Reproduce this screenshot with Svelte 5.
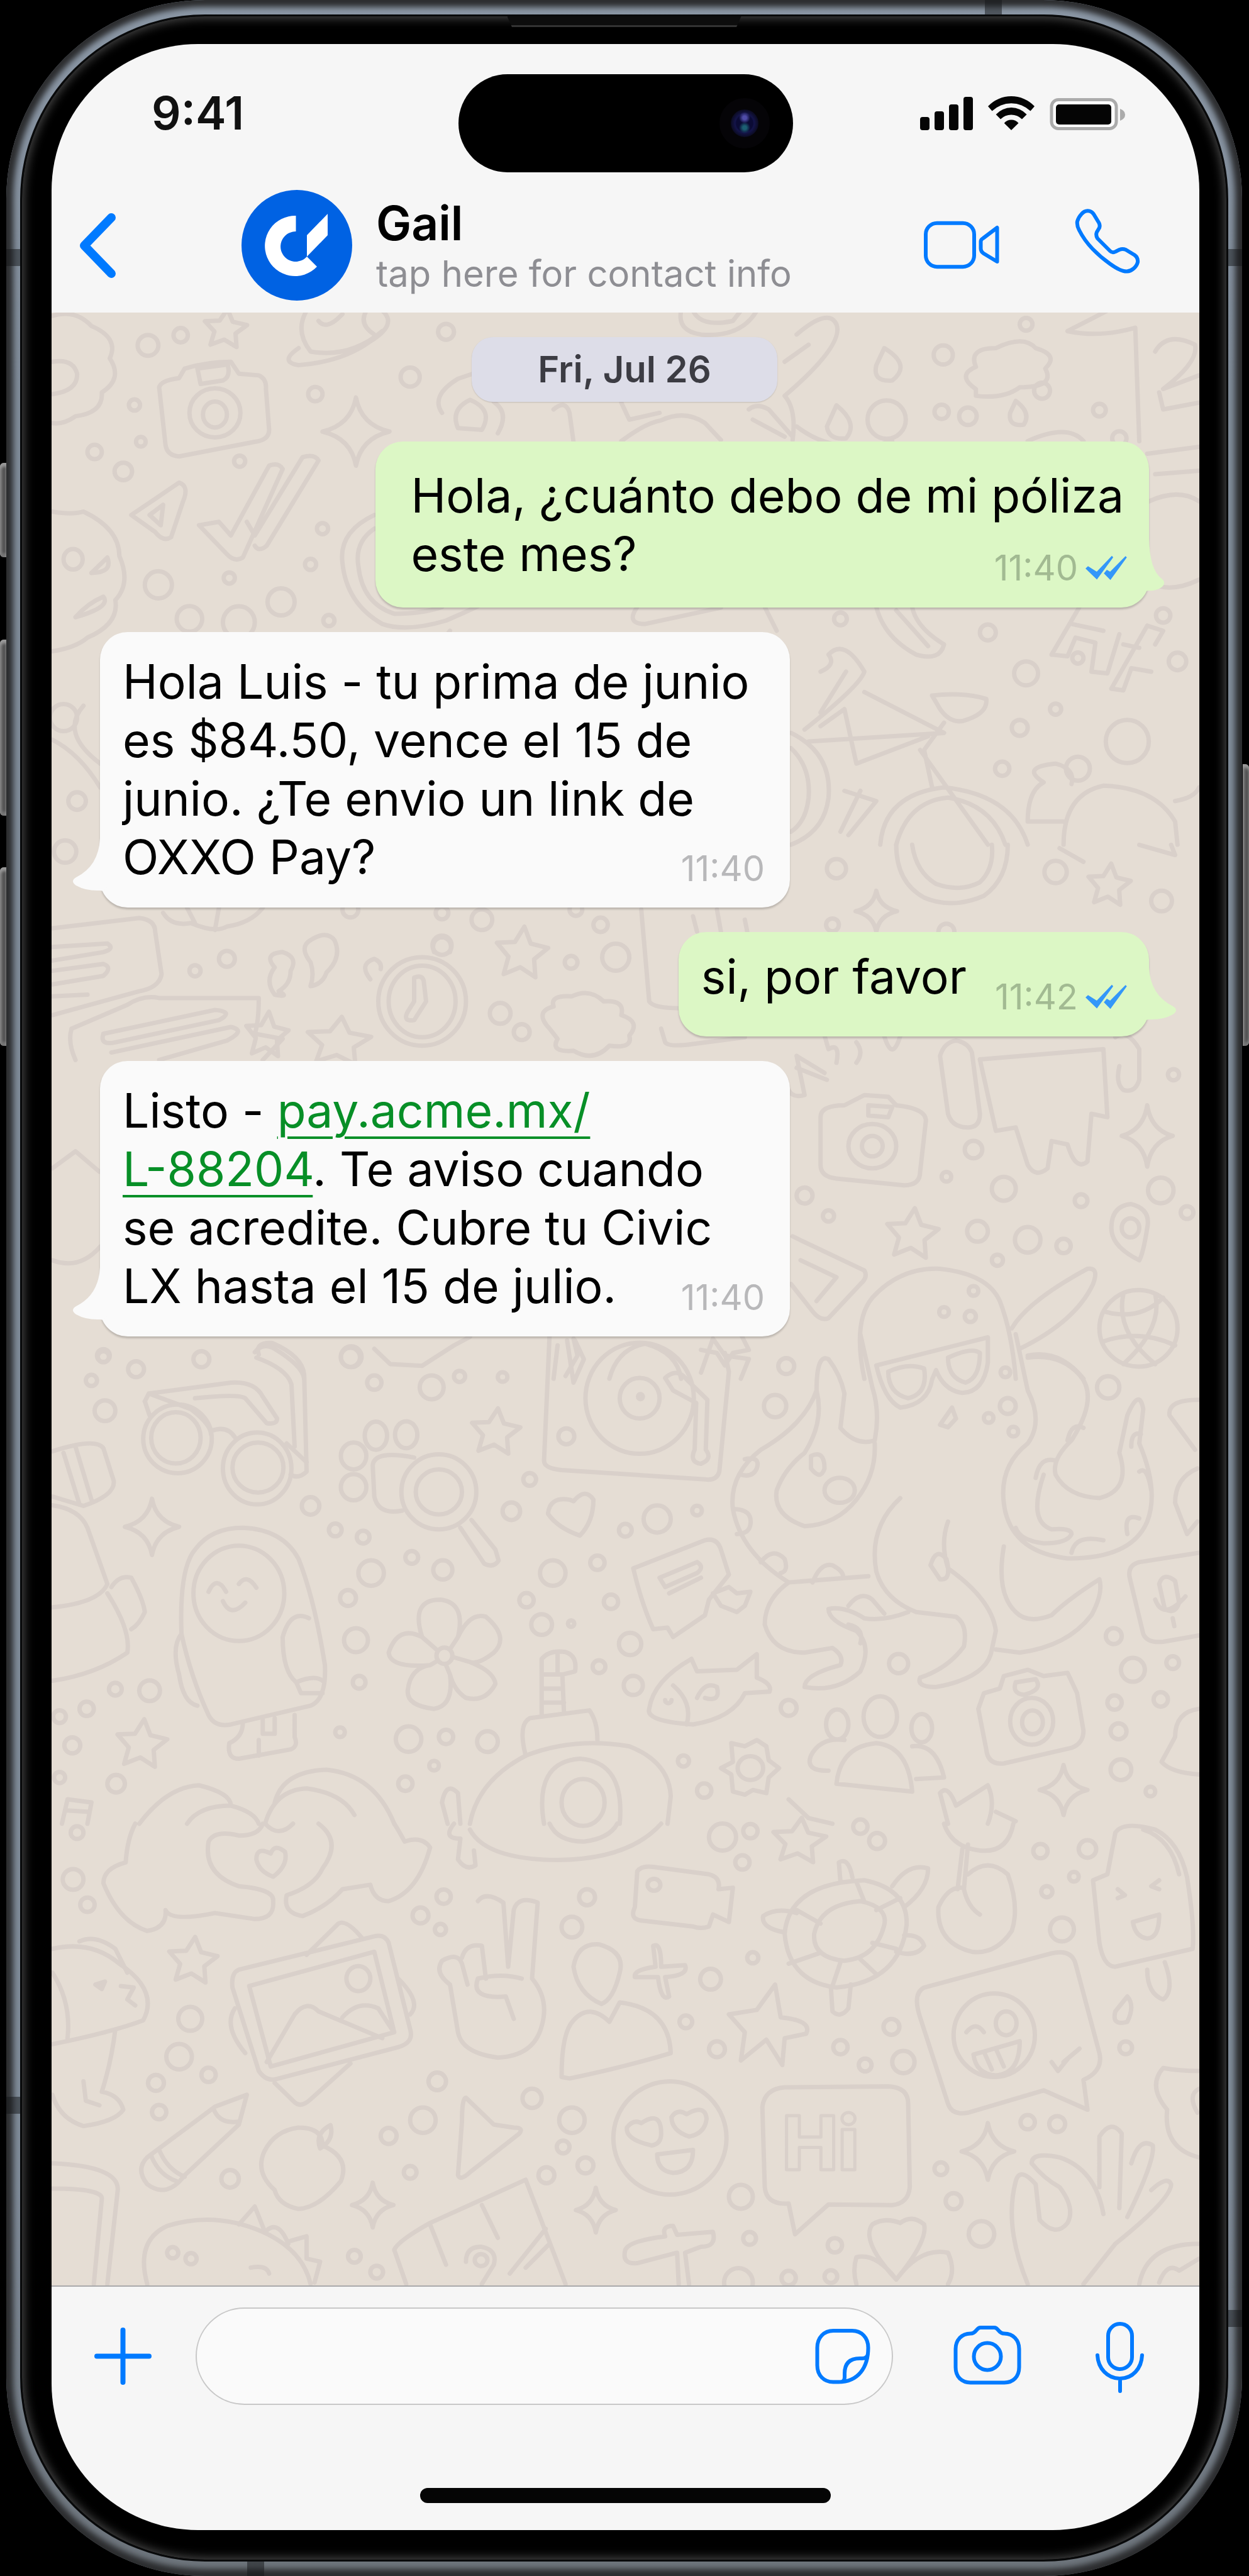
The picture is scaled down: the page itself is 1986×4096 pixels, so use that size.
<script lang="ts">
	type Message = {
		from: 'me' | 'them';
		lines: { text: string; link?: boolean }[][];
		time: string;
		short?: boolean;
	};

	let draft = $state('');

	const messages: Message[] = [
		{
			from: 'me',
			lines: [[{ text: 'Hola, ¿cuánto debo de mi póliza' }], [{ text: 'este mes?' }]],
			time: '11:40'
		},
		{
			from: 'them',
			lines: [
				[{ text: 'Hola Luis - tu prima de junio' }],
				[{ text: 'es $84.50, vence el 15 de' }],
				[{ text: 'junio. ¿Te envio un link de' }],
				[{ text: 'OXXO Pay?' }]
			],
			time: '11:40'
		},
		{
			from: 'me',
			lines: [[{ text: 'si, por favor' }]],
			time: '11:42',
			short: true
		},
		{
			from: 'them',
			lines: [
				[{ text: 'Listo - ' }, { text: 'pay.acme.mx/', link: true }],
				[{ text: 'L-88204', link: true }, { text: '. Te aviso cuando' }],
				[{ text: 'se acredite. Cubre tu Civic' }],
				[{ text: 'LX hasta el 15 de julio.' }]
			],
			time: '11:40'
		}
	];

	// Wallpaper doodles, one band of the chat at a time. Each band has its own vertical scale.
	type Band = {
		top: number;
		scale: number;
		dots: number[][];
		sparks: number[][];
		stars: number[][];
		shapes: string[];
	};

	const bands: Band[] = [
		{
			top: 495,
			scale: 0.5413,
			dots: [
				[186, 102, 13], [227, 72, 9], [169, 277, 7], [396, 245, 9], [515, 195, 12], [560, 62, 10],
				[119, 415, 9], [177, 385, 6], [155, 472, 11], [301, 442, 7], [405, 640, 7], [390, 745, 7],
				[199, 805, 17], [288, 785, 7], [353, 855, 17], [238, 905, 16], [413, 910, 7], [300, 915, 20],
				[1184, 130, 12], [1182, 297, 9], [1215, 310, 11], [1288, 40, 8], [1308, 235, 10], [1380, 292, 8],
				[1405, 375, 9], [1113, 320, 24], [1055, 905, 8], [1240, 945, 10], [1288, 1065, 15], [1353, 1020, 7],
				[1325, 1170, 7], [1280, 1225, 10], [1415, 1265, 27], [1353, 1345, 15], [1258, 1345, 9],
				[1478, 1030, 11], [1460, 895, 9], [97, 1440, 11], [80, 1195, 17]
			],
			sparks: [[447, 355, 42, 100]],
			stars: [[283, 55, 28, 60]],
			shapes: [
				'M66 15Q95 -5 115 45Q150 80 138 140Q155 200 128 240Q130 300 95 310Q80 335 66 330M66 150Q92 140 97 185Q98 235 66 245',
				'M200 225Q202 205 225 198L232 170Q260 150 290 150L300 185L325 190Q335 200 334 230L338 350Q338 380 320 385L225 428Q210 425 208 395Z M248 170L286 158Q290 195 280 205L252 215Z',
				'M238 300A32 72 0 1 0 302 300A32 72 0 1 0 238 300M255 305A15 38 0 1 0 285 305A15 38 0 1 0 255 305',
				'M375 110Q350 150 375 160Q430 150 465 90Q500 40 480 0M385 0Q370 60 390 120Q440 140 480 60M400 30Q410 60 430 10',
				'M165 600L225 505Q238 515 230 560L215 665Q205 680 195 650ZM188 600L205 570L202 630Z',
				'M250 630L275 620L290 660L338 455Q350 445 355 465L305 725Q295 740 285 715ZM310 620L320 660L380 430Q395 420 400 440L335 690Q325 710 320 690',
				'M66 590Q90 600 105 590Q150 640 150 720Q165 800 145 850Q150 920 110 960Q95 990 66 1000',
				'M80 730A12 30 0 1 0 104 730A12 30 0 1 0 80 730M115 770L135 725Q142 770 115 770M95 900Q110 860 130 840Q140 870 95 900',
				'M470 600Q425 650 430 740Q435 860 480 920Q510 945 560 910Q580 890 600 868M470 640Q445 680 450 750Q455 860 495 890Q530 890 555 870',
				'M555 300Q540 250 575 200L600 180M620 268Q640 300 625 360M575 345Q565 290 590 262Q620 290 605 350ZM695 290Q710 260 715 300L720 385M780 270L790 320L828 300M780 383Q810 330 830 322Q860 290 885 330L905 380',
				'M1000 70Q1040 -10 1050 40Q1060 100 985 250Q1000 290 995 380M985 150L1015 100M940 290Q950 270 965 290L995 370M945 320L985 370M855 0Q850 60 880 70Q930 80 950 0M870 0Q880 50 920 30L930 0',
				'M1110 110Q1145 160 1120 205Q1095 210 1100 160ZM1050 278Q1078 330 1062 375Q1040 380 1038 340ZM1275 265Q1295 300 1285 335Q1265 340 1268 300Z',
				'M1225 230Q1200 190 1225 165Q1215 110 1250 110Q1285 70 1300 110Q1330 130 1312 170Q1325 225 1280 225Q1260 260 1225 250Z',
				'M1340 60L1390 0M1340 60Q1380 80 1425 50L1430 383M1450 120Q1465 60 1500 100Q1505 150 1460 230L1505 190M1455 240L1460 290L1505 270M1440 420L1505 400M1450 480L1505 470M1442 560Q1480 520 1505 560M1445 800Q1470 830 1505 790',
				'M800 870Q785 920 810 920L905 872M1100 870Q1110 960 1150 1010Q1180 1030 1185 980Q1150 930 1145 870M1125 880L1165 985M960 870L975 940',
				'M1320 1010L1355 870M1320 1010L1340 1015L1350 960L1375 975L1370 1060L1390 1065L1405 950M1345 920L1385 940M1395 1110L1440 925M1395 1110L1410 1115L1420 1050L1445 1060M1410 980L1430 990M1440 925L1460 940L1450 980',
				'M1010 1230Q1080 1100 1085 1060Q1060 960 1040 1010Q1050 1040 1030 1060M1062 1060L1030 1180M1085 1120L1185 1240L1015 1265M1030 1220L1060 1170L1075 1330L1165 1250M1170 1130Q1210 1120 1238 1140Q1240 1180 1215 1200Q1195 1220 1180 1170ZM1185 1210L1160 1290L1170 1400',
				'M993 1240Q1045 1300 1040 1430Q1035 1530 993 1568M993 1285Q1018 1340 1015 1430Q1012 1500 993 1530M1105 1568Q1110 1420 1185 1400Q1270 1420 1290 1568M1125 1568Q1140 1440 1190 1430Q1245 1450 1262 1568M1080 1410L1055 1530M1060 1410L1100 1440L1065 1540M1155 1290L1240 1568',
				'M1290 1500Q1290 1410 1310 1385Q1280 1340 1325 1330Q1350 1345 1345 1390M1335 1568Q1335 1420 1385 1395Q1450 1400 1475 1500L1478 1568M1475 1440Q1500 1430 1505 1400M1290 1500L1335 1500',
				'M105 1160Q75 1240 126 1330M66 1260Q100 1300 126 1400',
				'M545 1000L565 940M1000 340Q1050 430 1120 383M1290 383Q1340 330 1360 383M460 0Q450 40 470 70'
			]
		},
		{
			top: 1344,
			scale: 0.5413,
			dots: [
				[1050, 70, 12], [1325, 80, 14], [1458, 165, 13], [1188, 255, 10], [605, 220, 13], [440, 190, 10],
				[555, 200, 8], [723, 190, 8], [754, 235, 9], [285, 335, 10], [245, 370, 7], [717, 345, 8],
				[773, 330, 17], [555, 295, 12], [628, 495, 13], [655, 550, 10], [1045, 235, 8], [1473, 675, 7],
				[1222, 895, 11], [1188, 975, 6], [1260, 1010, 15], [1357, 1045, 8], [1457, 1015, 16], [1010, 1030, 10],
				[1040, 1090, 7], [1227, 1135, 13], [1290, 1160, 16], [1335, 1178, 9], [1252, 1220, 7], [1490, 1080, 8],
				[1222, 1310, 6], [1218, 1385, 7], [1185, 1372, 6], [130, 1500, 8], [440, 1505, 12], [82, 20, 14]
			],
			sparks: [[1100, 195, 26, 60], [1440, 855, 32, 90]],
			stars: [[1392, 120, 28, 65], [655, 320, 34, 80], [425, 580, 42, 75], [1145, 1145, 34, 78], [335, 560, 28, 70]],
			shapes: [
				'M1125 0Q1125 110 1160 155Q1195 190 1235 150Q1265 100 1265 0M1145 0Q1150 80 1175 115Q1205 140 1230 110Q1248 70 1245 0',
				'M1430 0L1475 30L1470 0M1330 10L1360 50',
				'M66 245L175 215Q195 220 195 255L203 380Q200 420 175 430L66 500M66 300L135 290Q145 305 130 315L66 340M66 370L130 350Q142 360 130 385L66 410M66 445L110 440',
				'M90 540Q85 580 95 632M90 540L160 470Q180 440 200 450L325 450Q325 520 320 555L355 570L330 632M130 555L270 485Q295 490 275 515L145 580Q125 590 130 555M140 610L290 535Q310 545 285 575L200 632',
				'M345 360Q330 320 355 315Q375 330 365 370Q365 410 350 430Q365 450 345 440Q332 400 345 360M390 280Q410 250 420 280Q430 330 410 375Q405 410 390 415Q395 380 390 345Q375 300 390 280',
				'M205 200Q215 240 240 230Q270 260 285 240Q315 230 330 185M235 185L245 230M275 185L270 250',
				'M475 460A55 130 0 1 0 585 460A55 130 0 1 0 475 460M488 460A42 105 0 1 0 572 460A42 105 0 1 0 488 460M520 390Q530 380 532 400L535 460L520 515Q505 520 512 490L520 460ZM545 315Q540 280 555 270Q570 280 565 315M465 395Q450 350 470 335Q480 345 478 365',
				'M690 540Q670 490 695 475Q690 440 718 445Q740 420 758 460Q785 455 780 500Q805 520 790 560Q795 600 765 590Q745 640 720 605Q690 610 700 570Z',
				'M805 190L815 460Q820 480 853 480M830 540L835 580Q840 595 870 585L935 565M870 210L875 255M935 220L938 255M900 190L905 255',
				'M1035 560L1040 600Q1055 580 1050 640M1075 580Q1085 610 1075 640M1180 620Q1185 580 1200 575Q1215 580 1220 610L1230 790Q1230 830 1215 830Q1195 830 1190 790ZM1230 630L1250 840L1275 830L1290 940Q1300 980 1315 950L1320 870L1340 880Q1350 960 1365 930L1370 790L1390 800L1385 600L1230 630M1400 565Q1415 540 1430 600L1430 690Q1425 730 1410 720Q1400 700 1405 650M1110 562Q1120 640 1130 562',
				'M1000 620L1010 735Q995 745 990 720M1000 620L1035 670M1000 655L1038 690',
				'M1030 800Q1030 765 1060 765L1085 735L1115 740L1125 765Q1165 775 1162 815L1155 960Q1155 1000 1135 1000L1050 980Q1030 975 1030 940ZM1065 885A30 65 0 1 0 1125 885A30 65 0 1 0 1065 885M1082 885A13 30 0 1 0 1108 885A13 30 0 1 0 1082 885M1090 765L1120 770L1115 800L1090 795Z',
				'M1395 1125Q1395 1060 1420 1055Q1445 1070 1440 1125Q1435 1200 1430 1220Q1395 1180 1395 1125M1408 1125A11 28 0 1 0 1430 1125A11 28 0 1 0 1408 1125',
				'M995 1150L1085 1250Q1090 1270 1080 1290L1040 1390Q1030 1400 1020 1370L993 1290M1005 1220L1050 1270L1025 1340',
				'M1085 1568Q1070 1400 1095 1330Q1130 1240 1180 1245Q1240 1260 1255 1340Q1270 1430 1275 1568M1270 1420Q1290 1340 1365 1245Q1380 1240 1372 1290Q1350 1400 1280 1480M1290 1500Q1330 1480 1360 1568',
				'M1380 1420A48 110 0 1 0 1478 1420A48 110 0 1 0 1380 1420M1385 1370Q1430 1400 1460 1330M1383 1460Q1430 1420 1475 1470M1410 1320Q1400 1430 1450 1525M1450 1320Q1460 1420 1410 1525',
				'M320 1490Q330 1460 345 1480Q380 1530 382 1568M695 1568L700 1470M470 1480L490 1525L530 1530L570 1470L590 1445M720 1450L725 1500L710 1560M765 1568Q775 1480 810 1465Q850 1490 855 1568M880 1550L895 1450L910 1500L940 1510L930 1568',
				'M66 950L95 900L125 960M66 1220Q100 1250 126 1180'
			]
		},
		{
			top: 2122,
			scale: 0.4962,
			dots: [
				[130, 72, 7], [115, 148, 7], [171, 112, 10], [253, 80, 10], [132, 245, 13], [441, 72, 13],
				[470, 155, 9], [542, 170, 15], [577, 135, 7], [631, 137, 6], [987, 102, 10], [973, 230, 14],
				[1391, 170, 14], [1262, 122, 6], [1265, 230, 10], [1241, 268, 6], [390, 550, 11], [421, 627, 8],
				[456, 650, 8], [642, 567, 11], [665, 465, 8], [785, 628, 8], [825, 592, 17], [875, 565, 6],
				[466, 765, 16], [517, 715, 8], [556, 755, 12], [437, 845, 10], [694, 765, 16], [750, 732, 9],
				[661, 852, 9], [767, 857, 9], [680, 930, 13], [717, 927, 4], [791, 992, 14], [447, 980, 15],
				[451, 1115, 8], [752, 1065, 8], [795, 1125, 12], [188, 1142, 13], [145, 1137, 8], [109, 1200, 9],
				[91, 1317, 10], [146, 1440, 11], [513, 1297, 16], [560, 1290, 9], [612, 1305, 13], [427, 1275, 6],
				[545, 1382, 6], [509, 1440, 9], [858, 1367, 7], [884, 1462, 9], [990, 1197, 10], [1128, 1055, 12],
				[1398, 967, 10], [1422, 1075, 15], [1472, 1052, 8], [1399, 1180, 9], [1457, 1170, 9], [1404, 1272, 10],
				[1407, 1395, 13], [1444, 1465, 6], [1272, 312, 6], [711, 327, 10], [75, 1225, 8], [75, 1420, 7]
			],
			sparks: [[191, 617, 34, 90], [1335, 1460, 30, 80]],
			stars: [[622, 315, 32, 78], [178, 1315, 33, 82]],
			shapes: [
				'M325 65Q320 25 342 28Q380 70 382 130L385 440Q375 465 365 450M322 75Q360 110 366 160L370 360M182 215L187 190L290 155Q320 150 330 200L348 270Q348 290 335 285L308 205Q300 190 245 205M187 190L240 240Q265 290 265 320',
				'M180 335A43 110 0 1 0 266 335A43 110 0 1 0 180 335M190 332A31 82 0 1 0 252 332A31 82 0 1 0 190 332M280 430A43 115 0 1 0 366 430A43 115 0 1 0 280 430M292 427A32 80 0 1 0 356 427A32 80 0 1 0 292 427M265 310Q285 290 295 330M182 215L188 260M360 350L385 410',
				'M66 375Q120 330 130 365L143 470Q145 515 105 550L66 520M80 380L100 545M95 360L115 530M66 548Q100 560 110 620L135 800Q125 860 66 875M140 810Q150 770 165 780Q180 850 182 890Q175 930 165 945M135 830Q165 950 160 1020Q120 1090 66 1110',
				'M428 390A16 43 0 1 0 460 390A16 43 0 1 0 428 390M458 325A14 45 0 1 0 486 325A14 45 0 1 0 458 325M496 322A14 43 0 1 0 524 322A14 43 0 1 0 496 322M428 490A16 42 0 1 0 460 490A16 42 0 1 0 428 490M520 395Q470 370 468 420L470 520Q475 580 505 565',
				'M504 505A47 120 0 1 0 598 505A47 120 0 1 0 504 505M522 505A29 72 0 1 0 580 505A29 72 0 1 0 522 505M578 620L608 735Q620 750 626 725L622 690L592 595',
				'M690 0L683 405Q683 430 705 435L885 465Q900 470 903 440L915 120L910 60M735 205A68 178 0 1 0 871 205A68 178 0 1 0 735 205M778 205A25 65 0 1 0 828 205A25 65 0 1 0 778 205M801 200A3 8 0 1 0 807 200A3 8 0 1 0 801 200M835 140Q850 105 862 145L888 210L886 370Q895 400 880 415Q865 410 872 370L874 220L845 180ZM712 20L720 155L733 80L722 20M880 50L900 60L910 100L920 60L940 50L930 0',
				'M715 530Q690 520 688 575Q700 620 728 645Q745 600 745 530Q735 490 720 535Z',
				'M795 750L885 660Q900 650 905 690L915 770L890 850L885 900L845 970L838 940L820 945Q805 860 795 750M828 780L875 730Q885 745 875 765L835 810ZM840 830L880 780M895 830L915 810L925 830L942 825L935 870L925 890L905 870Z',
				'M228 960Q225 750 245 690Q265 620 305 620Q355 625 375 720Q395 850 408 1060Q410 1170 390 1190L290 1250Q270 1260 262 1220Q240 1100 228 960M243 830A56 150 0 1 0 357 830A56 150 0 1 0 243 830M262 825Q272 770 284 825M300 800Q310 765 322 812M280 855Q290 910 308 860M355 970Q365 880 388 910M355 970Q355 1080 372 1115Q395 1090 405 1110M372 1115L378 1150L405 1150M228 960Q215 1000 225 1090Q230 1180 248 1190M305 1245Q305 1290 288 1310Q285 1360 300 1360L365 1330Q375 1320 370 1290L370 1220M330 1235L330 1280L345 1280L345 1230M325 1350L325 1300',
				'M530 970Q515 850 553 850Q585 860 575 970M575 970Q590 890 610 905Q640 970 620 1020Q600 1060 590 1050Q620 1080 622 1120Q610 1180 585 1165Q570 1140 565 1090Q570 1190 545 1200Q510 1190 512 1140Q515 1070 540 1060Q490 1070 488 1020Q500 930 530 970L548 1010M575 970L566 1005M590 1050L570 1035M565 1090L560 1060M540 1060L550 1045M548 1030A10 26 0 1 0 568 1030A10 26 0 1 0 548 1030',
				'M660 1350Q650 1250 665 1230L740 1205Q750 1240 750 1300M680 1225L680 1040Q690 1010 710 1018Q725 1030 722 1080L706 1090L708 1210M683 1090L706 1090M683 1135L706 1135M683 1180L708 1180M700 1018L700 1085',
				'M590 1568Q600 1430 660 1350Q720 1290 790 1320Q840 1370 842 1480L838 1568M683 1568Q670 1370 728 1360Q785 1370 778 1568M705 1500A27 75 0 1 0 759 1500A27 75 0 1 0 705 1500M555 1500Q560 1430 575 1470L578 1568M562 1568L555 1500',
				'M868 1040L875 1080L925 1075L950 1025L950 1100Q970 1120 966 1145L935 1150Q920 1230 870 1250Q810 1240 815 1200Q820 1110 868 1040M845 1125Q870 1180 862 1250M835 1172A4 10 0 1 0 843 1172M875 1165Q885 1110 900 1130Q905 1180 885 1165',
				'M1025 180Q1025 60 1040 80Q1055 130 1060 190L1055 300Q1075 360 1098 340Q1105 250 1095 170L1080 0M1025 180Q1010 290 955 370Q915 450 920 560Q930 700 990 795L1090 775M1098 350Q1100 450 1075 530Q1050 610 1010 615Q970 580 975 500Q985 430 1010 380Q1035 280 1025 180M1035 500A19 40 0 1 0 1073 500A19 40 0 1 0 1035 500M1018 390Q1035 370 1035 430Q1030 470 1018 430ZM935 400Q955 390 950 430Q945 460 930 450M920 560Q945 560 942 610Q940 640 925 640M955 730Q970 680 985 720Q990 760 980 765M1020 795Q1030 730 1045 740Q1060 760 1058 780',
				'M1100 100L1240 10L1240 90Q1235 185 1208 188Q1185 180 1175 115L1170 145Q1165 225 1130 235Q1110 210 1100 100M1115 120Q1140 90 1160 110Q1165 190 1140 205Q1115 190 1115 120M1190 75Q1220 40 1230 60Q1230 140 1212 155Q1190 140 1190 75M1180 290L1195 235L1200 270L1190 298Z',
				'M1130 525Q1090 620 1100 760Q1110 850 1150 890L1200 905Q1215 930 1210 1000Q1190 1070 1155 1100Q1150 1130 1175 1130Q1240 1100 1245 1010L1250 950Q1245 850 1190 750Q1180 670 1190 600M1168 740Q1175 680 1188 720Q1195 790 1180 785ZM990 795Q960 850 960 930Q970 1020 1010 1020L1045 1005Q1060 1030 1055 1060Q1010 1090 1010 1130Q1050 1150 1080 1080Q1095 1000 1075 950Q1040 920 1040 880Q1060 870 1085 910Q1110 920 1140 890M1065 870Q1080 820 1095 850L1110 895M1065 930Q1085 940 1080 990',
				'M1275 0L1290 180Q1310 280 1290 350Q1250 430 1262 570Q1275 700 1340 718Q1420 720 1440 600Q1455 500 1430 350L1435 240Q1430 170 1415 260L1405 380Q1420 500 1380 525Q1340 520 1325 450Q1320 400 1345 340Q1380 200 1355 130Q1330 60 1290 75M1310 450Q1290 600 1320 625Q1345 620 1345 640Q1340 670 1310 670Q1280 660 1275 620M1260 680Q1250 830 1275 890Q1290 930 1320 900Q1340 850 1380 785Q1385 830 1370 900Q1340 1000 1280 1020L1250 1010M1340 340Q1345 280 1360 300M1300 460Q1305 390 1325 405M1415 640Q1410 570 1430 590M1345 700Q1350 640 1385 660M1430 440Q1440 420 1445 500M1420 360Q1420 310 1432 320',
				'M1505 210Q1465 210 1468 260L1500 370M1475 540Q1475 460 1503 430M1475 540L1490 640L1503 600M1505 700L1430 730Q1415 740 1418 780L1435 960Q1440 990 1460 985L1505 965M1455 800Q1460 760 1475 790L1480 860Q1475 900 1462 880ZM1450 850Q1460 920 1488 840M1472 910L1474 935',
				'M1235 1150L1255 1135L1260 1095L1290 1075L1310 1095L1340 1085L1352 1150L1360 1270Q1360 1310 1345 1325L1260 1375Q1240 1380 1238 1330L1228 1200ZM1268 1240A27 75 0 1 0 1322 1240A27 75 0 1 0 1268 1240M1283 1243A13 38 0 1 0 1309 1243A13 38 0 1 0 1283 1243M1275 1115L1300 1105Q1310 1140 1285 1155Q1270 1150 1275 1115',
				'M1037 1250A14 48 0 1 0 1065 1250A14 48 0 1 0 1037 1250M1084 1225A21 65 0 1 0 1126 1225A21 65 0 1 0 1084 1225M1144 1262A13 45 0 1 0 1170 1262A13 45 0 1 0 1144 1262M1050 1440Q1055 1320 1100 1310Q1140 1320 1145 1465ZM1060 1300Q1030 1290 1018 1350Q1010 1400 1040 1398M1145 1320Q1175 1310 1185 1420L1150 1425',
				'M905 1390L920 1370L918 1310L935 1320L950 1300L962 1320L965 1365L978 1390L965 1420L962 1470L945 1460L935 1475L920 1465L918 1410ZM926 1390A16 38 0 1 0 958 1390A16 38 0 1 0 926 1390',
				'M175 1568Q210 1450 250 1445Q290 1470 290 1510Q320 1530 325 1568M235 1568Q250 1510 290 1510M345 1500Q355 1400 410 1395Q470 1410 495 1568M333 1568Q345 1460 385 1455Q430 1470 445 1540M78 1568L85 1490L115 1500L110 1568M82 1525L112 1530',
				'M990 1490L1015 1550L1045 1568M1180 1470Q1190 1440 1200 1510L1240 1445Q1250 1500 1240 1568M1180 1470L1190 1568M1250 1530L1275 1560M1505 1200Q1475 1210 1475 1290L1458 1370Q1470 1405 1505 1410'
			]
		},
		{
			top: 2900,
			scale: 0.4736,
			dots: [
				[97, 30, 8], [92, 187, 13], [110, 272, 9], [907, 45, 17], [942, 25, 9], [932, 130, 9],
				[1101, 58, 10], [1306, 92, 9], [1365, 85, 11], [1348, 178, 6], [1314, 228, 7], [1333, 355, 15],
				[557, 245, 9], [528, 308, 10], [553, 355, 7], [737, 247, 10], [718, 347, 13], [239, 655, 15],
				[225, 782, 16], [196, 870, 10], [262, 843, 9], [200, 968, 9], [549, 865, 11], [668, 922, 12],
				[531, 995, 16], [488, 1048, 10], [515, 1170, 8], [718, 995, 16], [707, 1085, 8], [735, 1147, 10],
				[686, 1180, 10], [289, 1192, 11], [892, 522, 13], [945, 450, 7], [861, 665, 8], [900, 757, 10],
				[1055, 750, 9], [1119, 682, 10], [1134, 800, 14], [1086, 810, 8], [1413, 752, 8], [1290, 1002, 9],
				[1327, 1008, 10], [1181, 1158, 8], [1197, 1267, 10], [930, 1252, 15], [941, 1392, 8], [1048, 1415, 9],
				[1232, 1377, 16], [445, 1452, 8], [473, 1505, 8], [217, 1440, 7], [240, 1460, 7], [1043, 1520, 8],
				[990, 1525, 9], [927, 1540, 18], [1080, 10, 9]
			],
			sparks: [[1240, 1100, 33, 95], [468, 1280, 26, 75], [748, 1297, 25, 75]],
			stars: [[242, 462, 32, 82], [1003, 60, 35, 80]],
			shapes: [
				'M170 0Q160 50 158 130Q130 150 130 200Q150 330 185 360Q210 350 208 290Q215 330 270 300L320 320Q345 320 343 260Q345 220 300 210Q255 170 262 60Q270 20 300 40Q325 40 330 0M400 0Q430 60 405 150Q395 210 360 240Q355 300 380 310Q410 280 430 220L465 205Q470 260 488 260Q525 230 540 80Q530 40 508 60Q500 20 495 0M340 100Q322 75 322 120Q325 160 343 178Q362 140 358 95Q345 65 340 100M333 0Q350 50 368 0',
				'M590 20Q610 120 700 122Q790 120 830 0M690 0Q700 60 733 60Q765 50 775 0M570 0Q555 50 578 50L575 120Q585 160 597 140L595 90',
				'M800 160Q805 140 820 145L890 170Q905 180 902 220L920 215L915 330L895 305L890 345Q880 355 870 345L805 325Q790 320 797 280ZM813 205A8 20 0 1 0 829 205A8 20 0 1 0 813 205',
				'M600 260Q610 225 632 265L638 480L645 290Q650 240 675 265L668 520Q690 590 680 680Q670 780 625 785Q580 770 575 700L565 540Q545 500 555 460Q575 430 580 470L587 540M580 450Q585 400 605 410L610 520M600 520Q630 500 655 520M600 520Q590 590 635 580L645 655',
				'M300 490L470 378Q483 370 488 400L515 690Q520 735 500 750L350 855Q335 870 325 830L292 550Q290 500 300 490M313 545L470 430L495 700L340 815ZM335 800L370 640Q385 590 400 630L480 720M430 650Q450 590 475 620L492 690M435 520A15 42 0 1 0 465 520A15 42 0 1 0 435 520M385 440L425 335Q435 320 455 385M345 870L370 935Q378 955 390 925L440 805M295 620Q280 680 308 770M500 520Q530 600 515 640',
				'M720 480Q725 400 752 405Q785 430 778 500Q770 590 755 605Q725 570 720 480M705 850Q705 700 720 660Q740 600 765 665L778 600Q840 620 842 770Q780 820 715 855ZM820 410Q830 395 830 480L860 475Q865 510 835 515L840 580Q830 600 826 515L797 515Q795 490 823 480Z',
				'M985 370Q990 200 1085 190Q1140 220 1138 340Q1130 530 1050 550Q990 530 985 370M1022 370Q1030 270 1080 260Q1115 280 1110 340Q1100 450 1060 460Q1020 450 1022 370M1075 195L1085 262M1130 250L1100 290M1000 290L1030 335M990 470L1028 435M1095 400L1125 420M1055 465L1045 545M1080 455L1100 505M1055 195L1053 130Q1065 110 1070 180M1120 210Q1140 130 1165 150Q1165 220 1135 280M985 365Q955 350 958 310Q975 280 1000 300M1125 430Q1150 450 1160 410Q1155 370 1135 375M1043 550L1045 630Q1055 655 1065 620L1068 540',
				'M1185 0Q1195 80 1230 90Q1265 100 1272 0M1208 85L1202 220M1215 70L1210 220Q1215 280 1230 305M1215 170Q1240 110 1265 170Q1280 280 1270 360Q1250 440 1220 430Q1175 400 1178 280Q1190 210 1208 215',
				'M1400 30Q1410 -10 1450 20Q1480 60 1490 180Q1500 350 1497 420L1400 480Q1385 480 1380 400L1372 190L1390 170ZM1435 20Q1470 50 1480 170M1440 490Q1440 570 1460 590Q1475 560 1462 465M1403 220L1412 240L1403 250M1455 190L1445 210L1455 220M1422 330L1455 305Q1455 385 1440 385Q1425 380 1422 330',
				'M1160 550L1320 435Q1345 420 1350 470L1380 770Q1385 830 1360 860L1365 960L1310 895L1215 970Q1195 980 1190 940L1155 650Q1145 570 1160 550M1197 710A51 140 0 1 0 1299 710A51 140 0 1 0 1197 710M1213 700Q1225 660 1235 700M1250 670A13 40 0 1 0 1276 670A13 40 0 1 0 1250 670M1222 775L1280 730Q1280 840 1250 845Q1225 840 1222 775M1235 765L1245 825M1250 755L1260 815M1320 800L1328 830L1340 790M1335 800L1355 755',
				'M915 640L950 625L973 540L980 650Q1020 660 1012 705L985 720L982 810L962 725L930 795L935 700Z',
				'M66 420Q115 390 150 470Q200 560 180 660Q140 700 66 740M100 395Q120 370 145 420L160 500M66 500Q90 600 85 720M120 540L132 530L128 555ZM152 545L168 550L160 590L170 610M145 690Q140 800 128 900Q150 910 155 960Q145 1000 105 1015Q75 990 66 910M105 865L108 930L125 945',
				'M310 910L300 1010L232 1180Q210 1260 185 1210Q170 1160 185 1120L270 950ZM200 1095Q210 1160 232 1185M190 1115Q200 1180 222 1200M268 955Q275 1010 300 1000',
				'M375 1020Q405 1020 405 1080Q440 1120 428 1200Q400 1290 375 1293Q350 1280 345 1230Q320 1170 332 1100Q345 1030 375 1020M402 1090Q395 1040 415 1012Q420 1060 402 1090',
				'M585 920Q580 920 580 1000L575 1180Q578 1200 590 1170L652 1040Q658 1020 645 1020L620 1010Z',
				'M770 1055A71 190 0 1 0 912 1055A71 190 0 1 0 770 1055M787 1020Q795 990 805 1005Q830 960 830 1040Q830 1075 818 1080Q785 1060 787 1020M843 985Q850 955 862 975Q885 940 887 990Q885 1040 865 1050Q843 1030 843 985M825 1110L870 1095Q870 1170 845 1172Q825 1165 825 1110',
				'M985 885L1115 882Q1140 885 1140 940L1142 1220Q1140 1275 1120 1280L1040 1278L998 1378L990 1275Q962 1280 960 1220L957 950Q960 890 985 885',
				'M66 1140Q150 1150 148 1230L135 1545M66 1225Q130 1225 128 1260L118 1545',
				'M185 1545Q170 1400 210 1350Q270 1300 330 1370Q380 1430 390 1545M300 1345L320 1285L332 1365M335 1365Q350 1330 362 1410M365 1400L385 1385L385 1460L402 1470L395 1540M315 1490Q335 1480 338 1510',
				'M510 1545L495 1430Q500 1400 540 1340L660 1195L710 1545M540 1345L560 1480M605 1280L625 1390M685 1360L640 1510M585 1470Q585 1420 604 1420Q625 1430 620 1480L605 1545M596 1465A8 20 0 1 0 612 1465A8 20 0 1 0 596 1465M660 1490L690 1410',
				'M785 1430Q790 1400 835 1385Q830 1350 845 1350L850 1380L895 1370Q900 1420 880 1420L860 1440L865 1545M785 1430Q780 1480 800 1475L850 1440L852 1545',
				'M1130 1340Q1110 1320 1095 1345Q1080 1400 1125 1530Q1165 1400 1160 1345Q1145 1310 1130 1340M1125 1530Q1155 1420 1190 1440Q1200 1500 1190 1545M1125 1530Q1100 1440 1075 1455Q1070 1500 1075 1545',
				'M1295 1140Q1295 1100 1330 1120Q1375 1160 1385 1310M1295 1140Q1310 1190 1330 1220Q1350 1290 1340 1340Q1325 1390 1305 1330L1300 1210Q1280 1150 1275 1200Q1260 1350 1290 1545M1380 1220L1380 1050Q1395 990 1408 1040L1405 1290M1420 1140Q1430 1050 1447 1080Q1450 1130 1415 1320M1445 1230Q1465 1180 1470 1210Q1470 1260 1400 1410L1360 1545M1430 1545Q1440 1410 1505 1410M1455 1540Q1465 1470 1480 1500L1505 1460',
				'M1505 830Q1480 830 1460 820Q1440 880 1465 960Q1460 1090 1505 1120M1505 890Q1490 910 1503 970M1415 580Q1425 610 1415 665Q1395 680 1400 630Z'
			]
		}
	];

	function spark(x: number, y: number, rx: number, ry: number) {
		const q = (a: number, b: number) => `${x + a * rx} ${y + b * ry}`;
		return `M${q(0, -1)}Q${q(0.15, -0.2)} ${q(1, 0)}Q${q(0.15, 0.2)} ${q(0, 1)}Q${q(-0.15, 0.2)} ${q(-1, 0)}Q${q(-0.15, -0.2)} ${q(0, -1)}Z`;
	}

	function star(x: number, y: number, rx: number, ry: number) {
		const points = [];
		for (let i = 0; i < 10; i++) {
			const k = i % 2 ? 0.5 : 1;
			const a = (i * Math.PI) / 5 - Math.PI / 2 + 0.1;
			points.push(`${x + Math.cos(a) * rx * k} ${y + Math.sin(a) * ry * k}`);
		}
		return `M${points.join('L')}Z`;
	}

	const bars = [
		{ x: 1463, y: 187 },
		{ x: 1486, y: 178 },
		{ x: 1509, y: 167 },
		{ x: 1532, y: 155 }
	];
</script>

<div class="device">
	<span class="key key-left action"></span>
	<span class="key key-left volume-up"></span>
	<span class="key key-left volume-down"></span>
	<span class="key key-right power"></span>

	<div class="frame">
		<span class="antenna antenna-side left-top"></span>
		<span class="antenna antenna-side right-top"></span>
		<span class="antenna antenna-side left-bottom"></span>
		<span class="antenna antenna-side right-bottom"></span>
		<span class="antenna antenna-flat top-edge"></span>
		<span class="antenna antenna-flat bottom-edge"></span>

		<div class="bezel">
			<span class="speaker"></span>

			<main class="screen">
				<header class="header">
					<div class="status">
						<div class="clock">9:41</div>
						<div class="island"><span class="lens"></span></div>
						<svg class="status-icons" viewBox="1460 150 332 62" aria-hidden="true">
							{#each bars as bar}
								<rect x={bar.x} y={bar.y} width="15" height={208 - bar.y} rx="4" />
							{/each}
							<path d="M1571 170A51 51 0 0 1 1645 170L1638.500 177.500A44 44 0 0 0 1577.500 177.500Z" />
							<path d="M1583.600 183A33 33 0 0 1 1632.600 183L1625 190.500A24 24 0 0 0 1591 190.500Z" />
							<path d="M1596.700 196.700A15 15 0 0 1 1619.500 196.700L1608 208Z" />
							<rect class="battery" x="1672" y="159.500" width="103" height="46" rx="11" />
							<rect x="1679" y="167" width="88" height="32" rx="5" />
							<path class="nub" d="M1781 174Q1789 177 1789 183.500T1781 193Z" />
						</svg>
					</div>

					<div class="nav">
						<button class="icon-button back" aria-label="Back">
							<svg viewBox="126 336 58 105" width="58" height="105">
								<path class="chevron" d="M177 344L134 388.500L177 433" />
							</svg>
						</button>
						<svg class="avatar" viewBox="0 0 176 176" role="img" aria-label="Gail">
							<circle cx="88" cy="88" r="88" />
							<path d="M86.500 41A48 48 0 1 0 120 122L104 106A24 24 0 1 1 86.500 66ZM137 38V72L104 106V72Z" />
						</svg>
						<div class="contact">
							<h1>Gail</h1>
							<p>tap here for contact info</p>
						</div>
						<button class="icon-button video" aria-label="Video call">
							<svg viewBox="1469 340 121 96" width="121" height="96">
								<rect x="1473" y="352.700" width="77" height="69.500" rx="18" />
								<path d="M1586.500 360V414L1565 401Q1560.500 398 1560.500 393V382Q1560.500 379 1564 377Z" />
							</svg>
						</button>
						<button class="icon-button" aria-label="Voice call">
							<svg viewBox="1710 328 104 120" width="104" height="120">
								<path
									d="M1721 338C1726 332 1735 331 1740 338.500L1748.500 352.500Q1751 358 1748 362L1745 367Q1743 372 1746 377L1766 397Q1770 401 1775 398L1781 395Q1786 393 1791 395L1805 403.500Q1811 408 1810 415C1808 423 1800 429 1793 429.600C1785 430 1775 424 1766 417.500Q1751 407 1738.500 394Q1725 380 1717 364Q1713 357 1714 350Q1716 343 1721 338Z"
								/>
							</svg>
						</button>
					</div>
				</header>

				<section class="chat">
					<svg class="wallpaper" viewBox="82 498 1825 3136" preserveAspectRatio="xMidYMin slice" aria-hidden="true">
						{#each bands as band}
							<g transform="translate(0 {band.top}) scale(1.2666 {band.scale})">
								{#each band.dots as [x, y, r]}
									<ellipse cx={x} cy={y} rx={r} ry={(r * 1.2666) / band.scale} />
								{/each}
								{#each band.sparks as [x, y, rx, ry]}
									<path d={spark(x, y, rx, ry)} />
								{/each}
								{#each band.stars as [x, y, rx, ry]}
									<path d={star(x, y, rx, ry)} />
								{/each}
								{#each band.shapes as d}
									<path {d} />
								{/each}
							</g>
						{/each}
						<text x="1244" y="3450">Hi</text>
					</svg>

					<time class="date">Fri, Jul 26</time>

					{#each messages as message}
						<article class="bubble {message.from}" class:short={message.short}>
							<p>
								{#each message.lines as line, i}
									{#if i > 0}<br />{/if}{#each line as part}{#if part.link}<a href="#pay">{part.text}</a>{:else}{part.text}{/if}{/each}
								{/each}
							</p>
							<div class="meta">
								<time>{message.time}</time>
								{#if message.from === 'me'}
									<svg class="ticks" viewBox="840 84 280 168" role="img" aria-label="Read">
										<path d="M840 172L857 156L916 193L1018 86L1027 97L917 247ZM964 205L984 181L1006 193L1110 88L1119 97L1008 250Z" />
									</svg>
								{/if}
							</div>
							<svg class="tail" viewBox="0 0 56 90" aria-hidden="true">
								{#if message.from === 'me' && !message.short}
									<path d="M0 0H12Q13 50 32 64Q40 70 33 77Q24 84 12 83L6 84L0 76Z" />
								{:else}
									<path d="M0 0H12Q14 44 50 62Q60 68 50 75Q34 84 12 83L6 84L0 76Z" />
								{/if}
							</svg>
						</article>
					{/each}
				</section>

				<footer class="footer">
					<div class="composer">
						<button class="icon-button" aria-label="Add attachment">
							<svg viewBox="0 0 91 91" width="91" height="91">
								<path class="plus" d="M45.500 4V87M4 45.500H87" />
							</svg>
						</button>
						<div class="field">
							<input type="text" aria-label="Message" bind:value={draft} />
							<button class="icon-button" aria-label="Stickers">
								<svg viewBox="1297 3704 88 90" width="88" height="90">
									<path
										d="M1326 3708H1356C1371 3708 1381.500 3719 1381.500 3735C1381.500 3766 1366 3789.500 1334 3789.500H1326C1311 3789.500 1300.500 3779 1300.500 3763V3735C1300.500 3719 1311 3708 1326 3708ZM1381 3745Q1380 3752 1372 3752H1368Q1344 3752 1344 3776V3782Q1344 3789.500 1337 3789.500"
									/>
								</svg>
							</button>
						</div>
						<button class="icon-button camera" aria-label="Camera">
							<svg viewBox="1517 3696 108 100" width="108" height="100">
								<path
									d="M1560 3700H1582C1589 3700 1588 3709.500 1598 3709.500C1612 3709.500 1621.500 3720 1621.500 3734V3763C1621.500 3778 1612 3787.500 1598 3787.500H1544C1530 3787.500 1520.500 3778 1520.500 3763V3734C1520.500 3720 1530 3709.500 1544 3709.500C1554 3709.500 1553 3700 1560 3700Z"
								/>
								<circle cx="1571" cy="3746" r="21.500" />
							</svg>
						</button>
						<button class="icon-button" aria-label="Voice message">
							<svg viewBox="1742 3688 80 119" width="80" height="119">
								<rect x="1763" y="3696" width="38" height="72" rx="19" />
								<path d="M1746 3746C1747 3767 1762 3783 1782 3783S1816 3767 1817 3746M1782 3783V3803" />
							</svg>
						</button>
					</div>
					<div class="home-bar"></div>
				</footer>
			</main>
		</div>
	</div>
</div>

<style>
	:global(body) {
		background: #000;
		font-family: Inter, 'Liberation Sans', sans-serif;
	}

	.device {
		position: relative;
		padding: 0 11px 0 10px;
	}

	.frame {
		position: relative;
		display: flex;
		box-sizing: border-box;
		min-height: 100vh;
		padding: 23px 22px;
		border-radius: 316px;
		overflow: hidden;
		background: linear-gradient(#8b97a5, #7f8b99 15%, #7f8b99 85%, #6d747b);
		box-shadow: inset 0 0 10px 11px #2c2d2f;
	}

	.bezel {
		position: relative;
		display: flex;
		flex: 1;
		min-width: 0;
		padding: 44px 43px 47px 47px;
		border: 3px solid #08090a;
		border-radius: 294px;
		background: #000;
		box-shadow: inset 0 0 16px 3px #484848;
	}

	.screen {
		display: flex;
		flex: 1;
		flex-direction: column;
		min-width: 0;
		border-radius: 233px;
		overflow: hidden;
		background: #f6f6f6;
	}

	.speaker {
		position: absolute;
		top: 0;
		left: calc(50% - 186px);
		width: 372px;
		height: 14px;
		background: #0d0d0d;
		border-bottom: 3px solid #333;
		clip-path: polygon(0 0, 100% 0, 98% 100%, 2% 100%);
	}

	.antenna {
		position: absolute;
		background: rgba(20, 22, 24, 0.5);
	}

	.antenna-side {
		width: 22px;
		height: 27px;
	}

	.antenna-flat {
		width: 27px;
		height: 23px;
	}

	.left-top {
		left: 0;
		top: 396px;
	}

	.right-top {
		right: 0;
		top: 396px;
	}

	.left-bottom {
		left: 0;
		bottom: 735px;
	}

	.right-bottom {
		right: 0;
		bottom: 396px;
	}

	.top-edge {
		top: 0;
		right: 382px;
	}

	.bottom-edge {
		bottom: 0;
		left: 383px;
	}

	.key {
		position: absolute;
		width: 10px;
		background: linear-gradient(90deg, #777, #3b3b3c);
		box-shadow: inset 0 6px 4px #999, inset 0 -6px 4px #777;
	}

	.key-left {
		left: 0;
		border-radius: 6px 0 0 6px;
	}

	.key-right {
		right: 0;
		border-radius: 0 6px 6px 0;
	}

	.action {
		top: 736px;
		height: 150px;
	}

	.volume-up {
		top: 1017px;
		height: 280px;
	}

	.volume-down {
		top: 1379px;
		height: 284px;
	}

	.power {
		top: 1215px;
		height: 448px;
	}

	.header {
		height: 427px;
	}

	.status {
		display: grid;
		grid-template-columns: 1fr auto 1fr;
		padding: 48px 115px 0;
	}

	.clock {
		padding: 31px 0 0 44px;
		font-size: 73px;
		font-weight: 600;
		line-height: 62px;
		color: #111;
	}

	.island {
		display: flex;
		align-items: center;
		justify-content: flex-end;
		box-sizing: border-box;
		width: 532px;
		height: 156px;
		padding-right: 37px;
		border-radius: 78px;
		background: #000;
	}

	.lens {
		width: 44px;
		height: 44px;
		border: 18px solid #050407;
		border-radius: 50%;
		background:
			radial-gradient(circle at 50% 30%, #4f4ca8 0 3px, transparent 9px),
			radial-gradient(circle at 50% 66%, #1c5f73 0 3px, transparent 9px),
			radial-gradient(circle, #0b0b35 0 13px, #14144a 15px, #0b0b20 22px);
	}

	.status-icons {
		justify-self: end;
		width: 332px;
		height: 62px;
		margin-top: 31px;
		fill: #050505;
	}

	.status-icons .battery {
		fill: #fff;
		stroke: #ababab;
		stroke-width: 5;
	}

	.status-icons .nub {
		fill: #ababab;
	}

	.nav {
		display: flex;
		align-items: center;
		padding: 28px 94px 0 44px;
	}

	.icon-button {
		display: flex;
		flex: none;
		padding: 0;
		border: 0;
		background: none;
		cursor: pointer;
	}

	.icon-button svg {
		fill: none;
		stroke: #007aff;
		stroke-width: 6;
		stroke-linecap: round;
		stroke-linejoin: round;
	}

	.icon-button .chevron {
		stroke-width: 14;
	}

	.icon-button .plus {
		stroke-width: 8;
	}

	.back {
		margin-right: 200px;
	}

	.avatar {
		flex: none;
		width: 176px;
		height: 176px;
		margin-right: 38px;
		fill: #fff;
	}

	.avatar circle {
		fill: #0062e3;
	}

	.contact {
		flex: 1;
	}

	.contact h1 {
		margin: 0;
		font-size: 75px;
		font-weight: 600;
		line-height: 90px;
	}

	.contact p {
		margin: 0;
		font-size: 58px;
		line-height: 70px;
		color: #8e8e93;
	}

	.video {
		margin-right: 120px;
	}

	.chat {
		position: relative;
		display: flex;
		flex: 1;
		flex-direction: column;
		gap: 39px;
		padding: 39px 80px 39px 77px;
		background: #e5ddd4;
	}

	.wallpaper {
		position: absolute;
		inset: 0;
		width: 100%;
		height: 100%;
		fill: none;
		stroke: #d9d0ca;
		stroke-width: 7;
		stroke-linejoin: round;
		stroke-linecap: round;
	}

	.wallpaper path,
	.wallpaper ellipse {
		vector-effect: non-scaling-stroke;
	}

	.wallpaper text {
		font-size: 118px;
		font-weight: 800;
		stroke-width: 5;
	}

	.date {
		position: relative;
		align-self: center;
		margin-bottom: 24px;
		padding: 0 105px;
		border-radius: 34px;
		background: #dddde8;
		box-shadow: 0 1px 2px rgba(0, 0, 0, 0.15);
		font-size: 58px;
		font-weight: 600;
		line-height: 103px;
		color: #3c3c43;
	}

	.bubble {
		position: relative;
		box-sizing: border-box;
		border-radius: 44px;
		box-shadow: 0 3px 3px rgba(0, 0, 0, 0.18);
	}

	.bubble p {
		margin: 0;
		font-size: 75px;
		line-height: 93px;
		white-space: nowrap;
		color: #000;
	}

	.bubble a {
		color: #078f27;
		text-decoration-thickness: 4px;
		text-underline-offset: 14px;
	}

	.me {
		align-self: flex-end;
		padding: 39px 40px 39px 56px;
		background: #dcf7c5;
	}

	.me.short {
		padding: 24px 290px 49px 36px;
	}

	.them {
		align-self: flex-start;
		width: 1097px;
		padding: 32px 36px 34px;
		background: #fafafa;
	}

	.meta {
		position: absolute;
		right: 40px;
		bottom: 29px;
		display: flex;
		align-items: center;
		gap: 12px;
		font-size: 56px;
		line-height: 66px;
		color: #b8b8ba;
	}

	.me .meta {
		right: 35px;
		bottom: 30px;
		color: #a2ba92;
	}

	.ticks {
		width: 66px;
		height: 40px;
		fill: #3497f9;
	}

	.tail {
		position: absolute;
		bottom: 20px;
		width: 56px;
		height: 90px;
	}

	.me .tail {
		right: -44px;
		fill: #dcf7c5;
	}

	.them .tail {
		left: -44px;
		fill: #fafafa;
		transform: scaleX(-1);
	}

	.footer {
		display: flex;
		flex-direction: column;
		align-items: center;
		justify-content: space-between;
		box-sizing: border-box;
		height: 389px;
		padding: 33px 0 43px;
		border-top: 2px solid #a9a9ab;
	}

	.composer {
		display: flex;
		align-items: center;
		box-sizing: border-box;
		width: 100%;
		padding: 0 86px 0 68px;
	}

	.field {
		display: flex;
		flex: 1;
		align-items: center;
		box-sizing: border-box;
		min-width: 0;
		height: 155px;
		margin: 0 96px 0 70px;
		padding: 0 34px 0 64px;
		border: 2px solid #c8c8c8;
		border-radius: 78px;
		background: #fafafa;
	}

	.field input {
		flex: 1;
		min-width: 0;
		border: 0;
		outline: none;
		background: none;
		font-family: inherit;
		font-size: 75px;
	}

	.camera {
		margin-right: 117px;
	}

	.home-bar {
		width: 653px;
		height: 24px;
		border-radius: 12px;
		background: #050505;
	}
</style>
